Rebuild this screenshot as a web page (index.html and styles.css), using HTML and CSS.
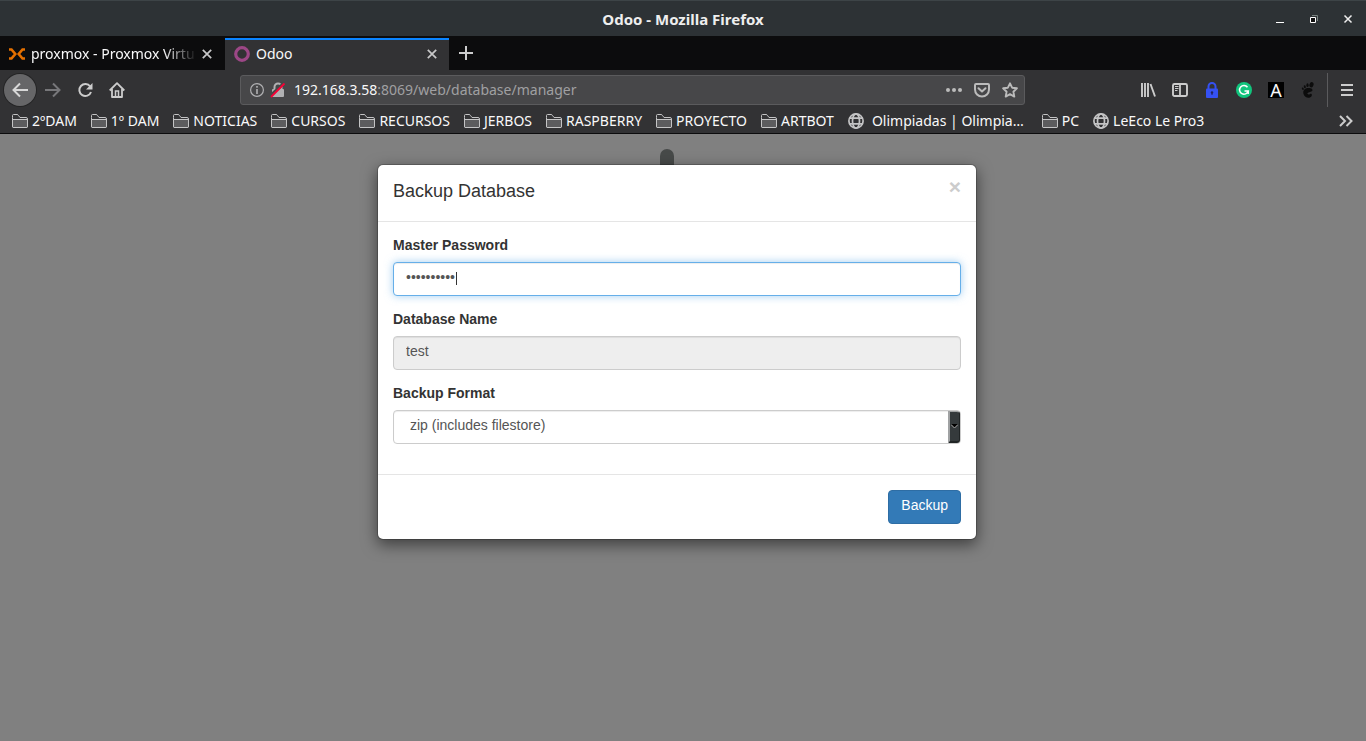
FILE: index.html
```html
<!DOCTYPE html>
<html lang="en">
<head>
<meta charset="utf-8">
<meta name="viewport" content="width=device-width, initial-scale=1">
<title>Odoo - Mozilla Firefox</title>
<link rel="stylesheet" href="styles.css">
</head>
<body>
<svg class="sprite" aria-hidden="true">
  <symbol id="folder" viewBox="0 0 16 14"><path d="M.5 3.5v8.500q0 1.500 1.500 1.500h12q1.500 0 1.500-1.500v-7q0-1.500-1.500-1.500H8L6.500 1.500q-.4-1-1.500-1H1.500q-1 0-1 1z" fill="#353537" stroke="#c4c4c5"/><path d="M1 5.500h14v7.500H1z" fill="#5c5c5e"/><path d="M.5 5.500h15M.5 4v8.500q0 1 1 1h13q1 0 1-1V5" fill="none" stroke="#c4c4c5"/></symbol>
  <symbol id="globe" viewBox="0 0 16 16"><g fill="none" stroke="#c4c4c5" stroke-width="1.700"><circle cx="8" cy="8" r="7.100"/><ellipse cx="8" cy="8" rx="3.500" ry="7.100"/><path d="M1.500 5.200h13M1.500 10.800h13"/></g></symbol>
  <symbol id="cross" viewBox="0 0 10 10"><path d="M.8.8l8.400 8.400M9.200.8L.8 9.200" fill="none" stroke="currentColor" stroke-width="1.700"/></symbol>
</svg>

<header class="titlebar">
  <h1 class="window-title">Odoo - Mozilla Firefox</h1>
  <div class="window-controls">
    <button type="button" aria-label="Minimize"><svg width="10" height="10" viewBox="0 0 10 10"><path d="M1 8.500h8" stroke="#fff"/></svg></button>
    <button type="button" aria-label="Restore"><svg width="10" height="10" viewBox="0 0 10 10" fill="none"><path d="M3 1.500h5.500V7" stroke="#78817f"/><path d="M1.500 3.500h5v5h-5z" fill="#111" stroke="#fff"/></svg></button>
    <button type="button" aria-label="Close"><svg width="10" height="10" viewBox="0 0 10 10"><path d="M1.500 1.500l7 7m0-7l-7 7" stroke="#eee" stroke-width="1.500"/></svg></button>
  </div>
</header>

<nav class="tabs" aria-label="Tabs">
  <div class="tab">
    <svg width="18" height="14" viewBox="0 0 18 14" fill="none"><path d="M1 2.500h2.500L7.300 7l-3.800 4.500H1M17 2.500h-2.500L10.700 7l3.800 4.500H17" stroke="#e57000" stroke-width="2.600"/></svg>
    <span class="tab-label fade">proxmox - Proxmox Virtu</span>
    <button type="button" aria-label="Close tab"><svg width="10" height="10"><use href="#cross"/></svg></button>
  </div>
  <div class="tab active">
    <svg width="16" height="16" viewBox="0 0 16 16"><circle cx="8" cy="8" r="6.300" fill="none" stroke="#9c4786" stroke-width="3.200"/></svg>
    <span class="tab-label">Odoo</span>
    <button type="button" aria-label="Close tab"><svg width="10" height="10"><use href="#cross"/></svg></button>
  </div>
  <button type="button" class="new-tab" aria-label="New tab"><svg width="14" height="14" viewBox="0 0 14 14"><path d="M7 0v14M0 7h14" stroke="#ccc" stroke-width="2"/></svg></button>
</nav>

<div class="toolbar">
  <div class="nav-buttons">
    <button type="button" class="back" aria-label="Back"><svg width="16" height="16" viewBox="0 0 16 16"><path d="M16 8H1.500M8 1.500L1.500 8 8 14.500" fill="none" stroke="#d8d8d8" stroke-width="2"/></svg></button>
    <button type="button" aria-label="Forward"><svg width="16" height="16" viewBox="0 0 16 16"><path d="M0 8h14.500M8 1.500L14.500 8 8 14.500" fill="none" stroke="#77777a" stroke-width="2"/></svg></button>
    <button type="button" aria-label="Reload"><svg width="16" height="16" viewBox="0 0 16 16"><path d="M13.200 4.500A6 6 0 1 0 14 10" fill="none" stroke="#ccc" stroke-width="2"/><path d="M15.500 1v6.500H9z" fill="#ccc"/></svg></button>
    <button type="button" aria-label="Home"><svg width="16" height="16" viewBox="0 0 16 16"><path d="M.7 8.500L8 1.200l7.300 7.300M3 7v8h10V7" fill="none" stroke="#ccc" stroke-width="1.800" stroke-linejoin="round"/><path d="M6.500 14V9h3v5" fill="none" stroke="#ccc" stroke-width="1.500"/></svg></button>
  </div>
  <div class="address">
    <svg width="14" height="14" viewBox="0 0 14 14"><circle cx="7" cy="7" r="6.400" fill="none" stroke="#b1b1b3" stroke-width="1.200"/><path d="M7 3v1.800M7 6v5" stroke="#b1b1b3" stroke-width="1.600"/></svg>
    <svg width="16" height="16" viewBox="0 0 16 16"><path d="M4.500 8V5a3.500 3.500 0 0 1 7 0v3" fill="none" stroke="#b1b1b3" stroke-width="2"/><rect x="2" y="7" width="12" height="8" rx="1" fill="#b1b1b3"/><path d="M0 14L14 1" stroke="#474749" stroke-width="3"/><path d="M1 15L14.500 1.500" stroke="#f80036" stroke-width="1.800"/></svg>
    <span class="url" role="textbox" aria-label="Address"><b>192.168.3.58</b>:8069/web/database/manager</span>
    <div class="page-actions">
      <button type="button" aria-label="Page actions"><svg width="16" height="16" viewBox="0 0 16 16" fill="#bbb"><circle cx="2" cy="8" r="2"/><circle cx="8" cy="8" r="2"/><circle cx="14" cy="8" r="2"/></svg></button>
      <button type="button" aria-label="Save to Pocket"><svg width="16" height="16" viewBox="0 0 16 16" fill="none" stroke="#bbb" stroke-width="2"><path d="M2 2h12q1 0 1 1v4.500a7 7 0 0 1-14 0V3q0-1 1-1z"/><path d="M4.500 6.200L8 9.500l3.500-3.300" stroke-linecap="round" stroke-linejoin="round"/></svg></button>
      <button type="button" aria-label="Bookmark this page"><svg width="16" height="16" viewBox="0 0 16 16"><path d="M8 1.300l2.100 4.400 4.800.6-3.500 3.400.9 4.900L8 12.200l-4.300 2.400.9-4.900L1.100 6.300l4.800-.6z" fill="none" stroke="#bbb" stroke-width="1.900" stroke-linejoin="round"/></svg></button>
    </div>
  </div>
  <div class="extensions">
    <button type="button" aria-label="Library"><svg width="16" height="16" viewBox="0 0 16 16"><path d="M2 1v14M5 1v14M8 1v14M10.500 2l4.500 12.500" fill="none" stroke="#ccc" stroke-width="1.900"/></svg></button>
    <button type="button" aria-label="Sidebars"><svg width="16" height="16" viewBox="0 0 16 16" fill="none" stroke="#ccc"><rect x="1" y="2" width="14" height="12" rx="1.500" stroke-width="1.900"/><path d="M8 2v12" stroke-width="1.800"/><path d="M3 4.500h3.500M3 6.500h3.500M3 8.500h2.500"/></svg></button>
    <button type="button" aria-label="Privacy lock"><svg width="16" height="16" viewBox="0 0 16 16"><path d="M4.500 8V4.500a3.500 3.500 0 0 1 7 0V8" fill="none" stroke="#3551f3" stroke-width="2"/><rect x="2" y="6.500" width="12" height="9.500" rx="1" fill="#3551f3"/><circle cx="8" cy="10.500" r="1.200" fill="#20235d"/><path d="M8 11v2" stroke="#20235d"/></svg></button>
    <button type="button" aria-label="Grammar checker"><svg width="16" height="16" viewBox="0 0 16 16"><circle cx="8" cy="8" r="8" fill="#11c57d"/><path d="M11.500 5.200A4.400 4.400 0 1 0 12.200 9H8.500M12.200 9v3" fill="none" stroke="#fff" stroke-width="1.500"/></svg></button>
    <button type="button" class="letter-button" aria-label="Font tools">A</button>
    <button type="button" aria-label="GNOME extensions"><svg width="16" height="16" viewBox="0 0 16 16" fill="#0c0c0c"><ellipse cx="11.500" cy="2.700" rx="2" ry="2.700" transform="rotate(20 11.500 2.700)"/><ellipse cx="7.500" cy="3.200" rx="1.100" ry="1.900"/><ellipse cx="4.800" cy="4.800" rx="1" ry="1.500" transform="rotate(-15 4.800 4.800)"/><ellipse cx="2.800" cy="6.700" rx=".9" ry="1.300" transform="rotate(-25 2.800 6.700)"/><path d="M9.500 6C5 5.500 2.500 8.500 3.500 12c.8 3 4 4.500 6.500 3.500 1.600-.8 2.400-2.500 1.500-3.500-1-.8-2 .7-3 .5-1.500-.3-1.500-1.500 0-2 2-.7 4-1 4-2.500 0-1.300-1.500-1.900-3-2z"/></svg></button>
  </div>
  <div class="menu-area">
    <button type="button" aria-label="Open menu"><svg width="16" height="16" viewBox="0 0 16 16"><path d="M2 3h12M2 8h12M2 13h12" stroke="#ccc" stroke-width="2"/></svg></button>
  </div>
</div>

<nav class="bookmarks" aria-label="Bookmarks">
  <a href="#"><svg width="16" height="14"><use href="#folder"/></svg>2ºDAM</a>
  <a href="#"><svg width="16" height="14"><use href="#folder"/></svg>1º DAM</a>
  <a href="#"><svg width="16" height="14"><use href="#folder"/></svg>NOTICIAS</a>
  <a href="#"><svg width="16" height="14"><use href="#folder"/></svg>CURSOS</a>
  <a href="#"><svg width="16" height="14"><use href="#folder"/></svg>RECURSOS</a>
  <a href="#"><svg width="16" height="14"><use href="#folder"/></svg>JERBOS</a>
  <a href="#"><svg width="16" height="14"><use href="#folder"/></svg>RASPBERRY</a>
  <a href="#"><svg width="16" height="14"><use href="#folder"/></svg>PROYECTO</a>
  <a href="#"><svg width="16" height="14"><use href="#folder"/></svg>ARTBOT</a>
  <a href="#" class="wide"><svg width="16" height="16"><use href="#globe"/></svg>Olimpiadas | Olimpia…</a>
  <a href="#"><svg width="16" height="14"><use href="#folder"/></svg>PC</a>
  <a href="#"><svg width="16" height="16"><use href="#globe"/></svg>LeEco Le Pro3</a>
  <button type="button" class="overflow" aria-label="More bookmarks"><svg width="14" height="12" viewBox="0 0 14 12"><path d="M1 1l5 5-5 5M7.500 1l5 5-5 5" fill="none" stroke="#ccc" stroke-width="2"/></svg></button>
</nav>

<main class="page">
  <div class="logo-tip"></div>
  <form class="modal" role="dialog" aria-labelledby="modal-title">
    <div class="modal-header">
      <h2 id="modal-title">Backup Database</h2>
      <button type="button" class="close" aria-label="Close">×</button>
    </div>
    <div class="modal-body">
      <div class="form-group">
        <label for="master">Master Password</label>
        <div class="field">
          <input class="control focused" id="master" type="password" value="adminadmin">
          <span class="caret"></span>
        </div>
      </div>
      <div class="form-group">
        <label for="name">Database Name</label>
        <input class="control" id="name" type="text" value="test" readonly>
      </div>
      <div class="form-group">
        <label for="format">Backup Format</label>
        <div class="field">
          <select class="control" id="format"><option>zip (includes filestore)</option></select>
          <span class="arrow"><svg width="7" height="5" viewBox="0 0 7 5"><path d="M0 0h7L3.500 4z" fill="#000"/><path d="M0 .5l3.500 3.500L7 .5" fill="none" stroke="#aaa"/></svg></span>
        </div>
      </div>
    </div>
    <div class="modal-footer"><button type="submit" class="primary">Backup</button></div>
  </form>
</main>
</body>
</html>
```
FILE: styles.css
```css
* { box-sizing: border-box; }

body {
  margin: 0;
  min-height: 100vh;
  display: flex;
  flex-direction: column;
  background: #808080;
  color: #f9f9fa;
  font: 14px/20px "Noto Sans", "Open Sans", sans-serif;
}

button {
  display: flex;
  align-items: center;
  justify-content: center;
  padding: 0;
  border: 0;
  background: none;
  color: inherit;
  font: inherit;
}

svg { display: block; flex: none; }
.sprite { position: absolute; width: 0; height: 0; }

.titlebar {
  display: grid;
  grid-template-columns: 1fr auto 1fr;
  align-items: center;
  height: 36px;
  border-top: 1px solid #3d4447;
  background: #2d3235;
}

.window-title {
  grid-column: 2;
  margin: 0;
  font-size: 15px;
  line-height: 20px;
  font-weight: 700;
  color: #eee;
}

.window-controls {
  display: flex;
  justify-content: flex-end;
  gap: 24px;
  padding-right: 13px;
}

.tabs {
  display: flex;
  height: 34px;
  background: #0c0c0d;
}

.tab {
  display: flex;
  align-items: center;
  gap: 5px;
  width: 225px;
  padding: 2px 13px 0 8px;
}

.tab.active {
  width: 224px;
  margin-top: 2px;
  padding: 0 12px 2px 9px;
  gap: 6px;
  border-top: 2px solid #0a84ff;
  background: #323234;
}

.tab button, .new-tab { color: #c8c8c9; }
.tab-label { flex: 1; overflow: hidden; white-space: nowrap; }
.fade { mask-image: linear-gradient(to right, #000 80%, transparent); }
.new-tab { width: 34px; }

.toolbar {
  display: flex;
  height: 40px;
  background: #323234;
}

.nav-buttons { display: flex; align-items: center; width: 240px; padding-left: 4px; }
.nav-buttons button { width: 32px; height: 32px; }
.nav-buttons .back { margin-right: 1px; border-radius: 50%; background: #666668; box-shadow: 0 0 0 1px #252526; }

.address {
  display: flex;
  align-items: center;
  flex: 1;
  height: 30px;
  margin-top: 5px;
  padding: 0 6px 0 9px;
  gap: 6px;
  border: 1px solid #5b5b5d;
  border-radius: 3px;
  background: #474749;
}

.url { flex: 1; padding-left: 2px; color: #a0a0a2; white-space: nowrap; }
.url b { font-weight: 400; color: #f9f9fa; }
.page-actions { display: flex; gap: 12px; }

.extensions {
  display: flex;
  align-items: center;
  gap: 16px;
  margin-left: 115px;
}

.letter-button {
  width: 16px;
  height: 16px;
  background: #000;
  font: 18px/16px "Noto Sans", sans-serif;
}

.menu-area {
  display: flex;
  align-items: center;
  width: 39px;
  margin: 3px 0 3px 11px;
  padding-left: 11px;
  border-left: 1px solid #5b5b5d;
}

.bookmarks {
  display: flex;
  align-items: center;
  gap: 14px;
  height: 24px;
  padding: 0 13px 1px 12px;
  border-bottom: 1px solid #0c0c0d;
  background: #323234;
  white-space: nowrap;
}

.bookmarks a { display: flex; align-items: center; gap: 4px; color: inherit; text-decoration: none; }
.bookmarks .wide { gap: 8px; margin-right: 4px; }
.overflow { margin-left: auto; }

.page {
  position: relative;
  flex: 1;
  padding: 30px 28px 30px 16px;
  font: 14px/20px "Liberation Sans", Arial, sans-serif;
}

.logo-tip {
  position: absolute;
  top: 15px;
  left: calc(50% - 23px);
  width: 14px;
  height: 32px;
  border-radius: 7px;
  background: #474a49;
}

.modal {
  position: relative;
  max-width: 600px;
  margin: 0 auto;
  border: 1px solid rgba(0, 0, 0, .2);
  border-radius: 6px;
  background: #fff;
  background-clip: padding-box;
  box-shadow: 0 5px 15px rgba(0, 0, 0, .5);
  color: #333;
}

.modal-header {
  display: flex;
  justify-content: space-between;
  align-items: flex-start;
  padding: 15px 15px 19px;
  border-bottom: 1px solid #e5e5e5;
}

.modal-header h2 { margin: 0; font-size: 18px; line-height: 22px; font-weight: 400; }
.close { color: #ccc; font-size: 21px; line-height: 14px; font-weight: 700; }
.modal-body { padding: 15px; }
.form-group { margin-bottom: 15px; }
label { display: block; height: 20px; margin-bottom: 5px; line-height: 16px; font-weight: 700; }
.field { position: relative; }

.control {
  display: block;
  width: 100%;
  height: 34px;
  padding: 4px 12px 8px;
  border: 1px solid #ccc;
  border-radius: 4px;
  outline: 0;
  appearance: none;
  background: #fff;
  box-shadow: inset 0 1px 1px rgba(0, 0, 0, .075);
  color: #555;
  font: inherit;
}

.control[readonly] { background: #eee; }
.focused { border-color: #66afe9; box-shadow: inset 0 1px 1px rgba(0, 0, 0, .075), 0 0 8px rgba(102, 175, 233, .6); }
select.control { padding-left: 16px; }

.caret {
  position: absolute;
  left: 63px;
  top: 10px;
  width: 1px;
  height: 13px;
  background: #333;
}

.arrow {
  position: absolute;
  top: 1px;
  right: 1px;
  bottom: 1px;
  display: flex;
  align-items: center;
  justify-content: center;
  width: 12px;
  border: solid #202425;
  border-width: 1px 1px 2px;
  border-left: 2px solid #a0a2a3;
  border-top-color: #a0a2a3;
  border-radius: 0 3px 3px 0;
  background: #353a3c;
  pointer-events: none;
}

.modal-footer { display: flex; justify-content: flex-end; padding: 15px; border-top: 1px solid #e5e5e5; }
.primary { padding: 4px 12px 8px; border: 1px solid #2e6da4; border-radius: 4px; background: #337ab7; color: #fff; }
```
